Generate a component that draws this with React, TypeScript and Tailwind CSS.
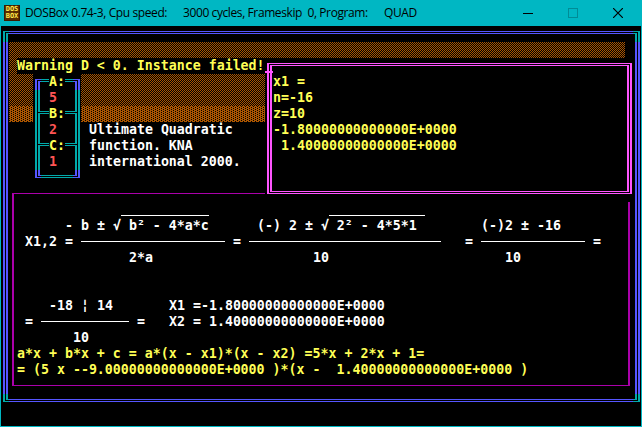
import type { ReactNode } from 'react';

type Corner = 'tl' | 'tr' | 'bl' | 'br';

const cornerOuter: Record<Corner, string> = {
  tl: 'ml-[2px] mt-[5px] h-[11px] border-l-2 border-t pl-px pt-px',
  tr: 'mr-px mt-[5px] h-[11px] border-r-2 border-t pr-px pt-px',
  bl: 'ml-[2px] h-[8px] border-l-2 border-b pl-px pb-px',
  br: 'mr-px h-[8px] border-r-2 border-b pr-px pb-px',
};

const cornerInner: Record<Corner, string> = {
  tl: 'border-l-2 border-t',
  tr: 'border-r-2 border-t',
  bl: 'border-l-2 border-b',
  br: 'border-r-2 border-b',
};

/** One character cell holding a double-line corner. */
function CornerCell({ corner, className }: { corner: Corner; className: string }) {
  return (
    <div className={`bg-black ${className}`}>
      <div className={`border-current ${cornerOuter[corner]}`}>
        <div className={`h-full border-current ${cornerInner[corner]}`} />
      </div>
    </div>
  );
}

/** Double-line frame filling the grid area it is given. */
function DoubleFrame({ className, children }: { className: string; children?: ReactNode }) {
  return (
    <div className={`bg-black pt-[5px] pr-px pb-[8px] pl-[2px] ${className}`}>
      <div className="flex h-full flex-col gap-px border-x-2 border-y border-current p-px">
        {children ?? <div className="flex-1 border-x-2 border-y border-current" />}
      </div>
    </div>
  );
}

function T({ className, children }: { className: string; children: string }) {
  return <span className={`col-end-[81] whitespace-pre ${className}`}>{children}</span>;
}

/** Horizontal rule through the middle of a text row. */
function Rule({ className }: { className: string }) {
  return <div className={`mt-[7px] h-px bg-white ${className}`} />;
}

/** Underscore line near the bottom of a text row. */
function Overline({ className }: { className: string }) {
  return <div className={`mt-[13px] h-px bg-white ${className}`} />;
}

/** Dithered fill of the shade characters. */
function Shade({ kind, className }: { kind: 'medium' | 'dark'; className: string }) {
  return (
    <svg className={`h-full w-full ${className}`} shapeRendering="crispEdges">
      <rect width="100%" height="100%" fill={`url(#shade-${kind})`} />
    </svg>
  );
}

function ShadePatterns() {
  return (
    <svg className="col-start-1 row-start-1 size-0" shapeRendering="crispEdges">
      <defs>
        <pattern id="shade-medium" width="8" height="2" patternUnits="userSpaceOnUse">
          <path
            fill="#aa5500"
            d="M1 0h1v1h-1zM3 0h1v1h-1zM5 0h1v1h-1zM7 0h1v1h-1zM0 1h1v1h-1zM2 1h1v1h-1zM4 1h1v1h-1zM6 1h1v1h-1z"
          />
        </pattern>
        <pattern id="shade-dark" width="8" height="2" patternUnits="userSpaceOnUse">
          <path
            fill="#aa5500"
            d="M1 0h3v1h-3zM5 0h3v1h-3zM0 1h2v1h-2zM3 1h3v1h-3zM7 1h1v1h-1z"
          />
        </pattern>
      </defs>
    </svg>
  );
}

function TitleBar() {
  return (
    <header className="flex h-[26px] shrink-0 items-center bg-[#00b7c3] pl-[4px] font-['Open_Sans',sans-serif] text-[12px] tracking-[-0.4px] text-black">
      <div className="grid size-[16px] shrink-0 grid-rows-2 border border-[#3c1c00] bg-[#5a2c00] text-center font-['DejaVu_Sans_Mono',monospace] text-[7px] leading-[7px] font-bold tracking-normal text-[#ffe84a]">
        <span>DOS</span>
        <span>BOX</span>
      </div>
      <span className="ml-[5px] w-[158px] shrink-0 whitespace-pre">DOSBox 0.74-3, Cpu speed:</span>
      <span className="w-[201px] shrink-0 whitespace-pre">3000 cycles, Frameskip  0, Program:</span>
      <span className="shrink-0">QUAD</span>
      <div className="ml-auto flex items-center gap-[35px] pr-[19px]">
        <svg width="10" height="10" viewBox="0 0 10 10" shapeRendering="crispEdges">
          <path d="M0 5.5H10" stroke="#000" />
        </svg>
        <svg width="10" height="10" viewBox="0 0 10 10" shapeRendering="crispEdges">
          <path d="M.5 .5h9v9h-9z" stroke="#008c96" fill="none" />
        </svg>
        <svg width="10" height="10" viewBox="0 0 10 10">
          <path d="M0 0L10 10M10 0L0 10" stroke="#000" strokeWidth="1.2" />
        </svg>
      </div>
    </header>
  );
}

export default function App() {
  return (
    <div className="flex h-[427px] w-[642px] flex-col overflow-hidden bg-[#00b7c3]">
      <TitleBar />
      <main className="mx-px mb-px grid h-[400px] grid-cols-[repeat(80,8px)] grid-rows-[repeat(25,16px)] overflow-hidden bg-black font-['DejaVu_Sans_Mono',monospace] text-[13.289px] leading-[16px] font-bold text-white">
        <ShadePatterns />
        <DoubleFrame className="col-start-1 col-end-[81] row-start-1 row-end-[25] text-[#5555ff]" />
        <CornerCell corner="tl" className="col-start-1 row-start-1 text-[#00aaaa]" />
        <CornerCell corner="tr" className="col-start-[80] row-start-1 text-[#00aaaa]" />
        <CornerCell corner="bl" className="col-start-1 row-start-[24] text-[#00aaaa]" />
        <CornerCell corner="br" className="col-start-[80] row-start-[24] text-[#00aaaa]" />

        <Shade kind="medium" className="col-start-2 col-end-[79] row-start-2" />
        <Shade kind="medium" className="col-start-2 col-end-[34] row-start-3 row-end-6" />
        <Shade kind="dark" className="col-start-2 col-end-[34] row-start-6" />

        <div className="col-start-2 col-end-[80] row-start-[11] row-end-[24] pt-[7px] pr-[3px] pb-[8px] pl-[3px]">
          <div className="h-full border-x-2 border-y border-[#aa00aa]" />
        </div>

        <div className="col-start-3 col-end-[34] row-start-3 bg-black" />
        <T className="col-start-3 row-start-3 text-[#ffff55]">Warning D &lt; 0. Instance failed!</T>

        <DoubleFrame className="col-start-5 col-end-11 row-start-4 row-end-11 text-[#00aaaa]">
          <div className="flex-1 border-x-2 border-y border-current" />
          <div className="flex-1 border-x-2 border-y border-current" />
          <div className="flex-1 border-x-2 border-y border-current" />
        </DoubleFrame>
        <CornerCell corner="tl" className="col-start-5 row-start-4 text-[#5555ff]" />
        <CornerCell corner="tr" className="col-start-10 row-start-4 text-[#5555ff]" />
        <CornerCell corner="bl" className="col-start-5 row-start-10 text-[#5555ff]" />
        <CornerCell corner="br" className="col-start-10 row-start-10 text-[#5555ff]" />
        <span className="col-start-7 col-end-9 row-start-4 bg-black text-[#ffff55]">A:</span>
        <span className="col-start-7 col-end-9 row-start-6 bg-black text-[#ffff55]">B:</span>
        <span className="col-start-7 col-end-9 row-start-8 bg-black text-[#ffff55]">C:</span>
        <span className="col-start-7 row-start-5 text-[#ff5555]">5</span>
        <span className="col-start-7 row-start-7 text-[#ff5555]">2</span>
        <span className="col-start-7 row-start-9 text-[#ff5555]">1</span>

        <T className="col-start-12 row-start-7">Ultimate Quadratic</T>
        <T className="col-start-12 row-start-8">function. KNA</T>
        <T className="col-start-12 row-start-9">international 2000.</T>

        <DoubleFrame className="col-start-[34] col-end-[80] row-start-3 row-end-[12] text-[#ff55ff]" />
        <div className="col-start-[34] row-start-3 mt-[13px] h-[2px] bg-[#ff55ff]" />
        <T className="col-start-[35] row-start-4 text-[#ffff55]">x1 =</T>
        <T className="col-start-[35] row-start-5 text-[#ffff55]">n=-16</T>
        <T className="col-start-[35] row-start-6 text-[#ffff55]">z=10</T>
        <T className="col-start-[35] row-start-7 text-[#ffff55]">-1.80000000000000E+0000</T>
        <T className="col-start-[35] row-start-8 text-[#ffff55]"> 1.40000000000000E+0000</T>

        <Overline className="col-start-[16] col-end-[27] row-start-[12]" />
        <Overline className="col-start-[42] col-end-[54] row-start-[12]" />
        <T className="col-start-9 row-start-[13]">- b ± √ b² - 4*a*c</T>
        <T className="col-start-[33] row-start-[13]">(-) 2 ± √ 2² - 4*5*1</T>
        <T className="col-start-[61] row-start-[13]">(-)2 ± -16</T>

        <T className="col-start-4 row-start-[14]">X1,2 =</T>
        <Rule className="col-start-11 col-end-[29] row-start-[14]" />
        <T className="col-start-[30] row-start-[14]">=</T>
        <Rule className="col-start-[32] col-end-[56] row-start-[14]" />
        <T className="col-start-[59] row-start-[14]">=</T>
        <Rule className="col-start-[61] col-end-[74] row-start-[14]" />
        <T className="col-start-[75] row-start-[14]">=</T>

        <T className="col-start-[17] row-start-[15]">2*a</T>
        <T className="col-start-[40] row-start-[15]">10</T>
        <T className="col-start-[64] row-start-[15]">10</T>

        <T className="col-start-7 row-start-[18]">-18 ¦ 14</T>
        <T className="col-start-[22] row-start-[18]">X1 =-1.80000000000000E+0000</T>
        <T className="col-start-4 row-start-[19]">=</T>
        <Rule className="col-start-6 col-end-[17] row-start-[19]" />
        <T className="col-start-[18] row-start-[19]">=</T>
        <T className="col-start-[22] row-start-[19]">X2 = 1.40000000000000E+0000</T>
        <T className="col-start-10 row-start-[20]">10</T>

        <T className="col-start-3 row-start-[21] text-[#ffff55]">
          a*x + b*x + c = a*(x - x1)*(x - x2) =5*x + 2*x + 1=
        </T>
        <T className="col-start-3 row-start-[22] text-[#ffff55]">
          {'= (5 x --9.00000000000000E+0000 )*(x -  1.40000000000000E+0000 )'}
        </T>
      </main>
    </div>
  );
}
